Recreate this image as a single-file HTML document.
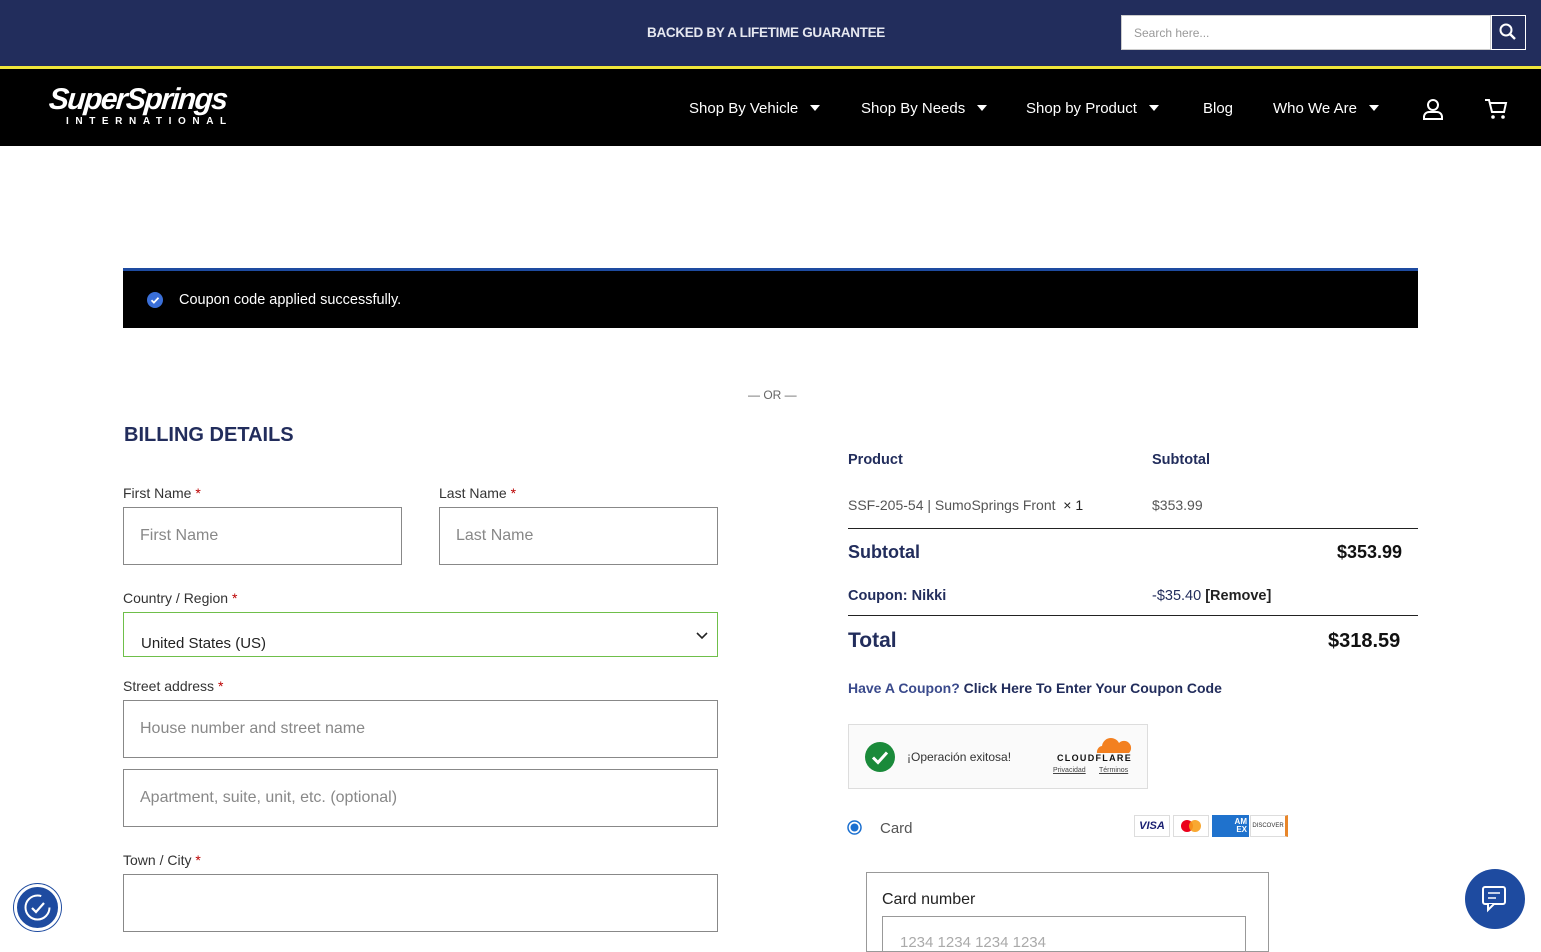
<!DOCTYPE html>
<html><head><meta charset="utf-8"><style>
*{box-sizing:border-box;margin:0;padding:0}
body{width:1541px;height:945px;overflow:hidden;background:#fff;font-family:"Liberation Sans",sans-serif;color:#333;position:relative}
.abs{position:absolute}
.top{left:0;top:0;width:1541px;height:66px;background:#222d5c}
.yl{left:0;top:66px;width:1541px;height:3px;background:#f0e63a}
.nav{left:0;top:69px;width:1541px;height:77px;background:#000}
.navi{color:#fff;font-size:15px;top:100px}
.caret{display:inline-block;border-left:5px solid transparent;border-right:5px solid transparent;border-top:6px solid #fff;margin-left:12px;vertical-align:2px}
.lbl{font-size:14px;color:#333}
.req{color:#b00}
.inp{border:1px solid #888;background:#fff;font-size:16px;color:#888;padding-left:16px;display:flex;align-items:center}
.navy{color:#222d5c}
</style></head><body>
<div class="abs top"></div>
<div class="abs" style="left:647px;top:25px;color:#e6e8f0;font-weight:bold;font-size:13.5px;letter-spacing:-0.3px">BACKED BY A LIFETIME GUARANTEE</div>
<div class="abs" style="left:1121px;top:15px;width:370px;height:35px;background:#fff;border:1px solid #ccc;font-size:12px;color:#999;padding:10px 12px">Search here...</div>
<div class="abs" style="left:1491px;top:15px;width:35px;height:35px;background:#222d5c;border:1px solid #fff">
<svg width="33" height="33" viewBox="0 0 33 33"><circle cx="14" cy="14" r="5.5" stroke="#fff" stroke-width="2" fill="none"/><line x1="18" y1="18" x2="23" y2="23" stroke="#fff" stroke-width="2.4"/></svg></div>
<div class="abs yl"></div>
<div class="abs nav"></div>
<div class="abs" style="left:49px;top:83px;color:#fff;font-weight:bold;font-style:italic;font-size:30px;letter-spacing:-1.6px;transform:skewX(-5deg)">SuperSprings</div>
<div class="abs" style="left:66px;top:116px;color:#fff;font-weight:bold;font-size:10px;letter-spacing:6.6px">INTERNATIONAL</div>
<div class="abs navi" style="left:689px">Shop By Vehicle<span class="caret"></span></div>
<div class="abs navi" style="left:861px">Shop By Needs<span class="caret"></span></div>
<div class="abs navi" style="left:1026px">Shop by Product<span class="caret"></span></div>
<div class="abs navi" style="left:1203px">Blog</div>
<div class="abs navi" style="left:1273px">Who We Are<span class="caret"></span></div>
<svg class="abs" style="left:1422px;top:98px" width="22" height="22" viewBox="0 0 22 22"><circle cx="11" cy="7" r="5" stroke="#fff" stroke-width="2" fill="none"/><path d="M2 21v-2a5 5 0 0 1 5-5h8a5 5 0 0 1 5 5v2z" stroke="#fff" stroke-width="2" fill="none"/></svg>
<svg class="abs" style="left:1484px;top:97px" width="24" height="24" viewBox="0 0 24 24"><path d="M1 3h4l3 12h12l2-9H6" stroke="#fff" stroke-width="2" fill="none"/><circle cx="9" cy="20" r="1.8" fill="#fff"/><circle cx="19" cy="20" r="1.8" fill="#fff"/></svg>

<div class="abs" style="left:123px;top:268px;width:1295px;height:60px;background:#000;border-top:3px solid #1e4ba0"></div>
<svg class="abs" style="left:147px;top:292px" width="16" height="16"><circle cx="8" cy="8" r="8" fill="#3a6fd8"/><path d="M4.5 8.2l2.4 2.4 4.6-4.8" stroke="#fff" stroke-width="1.8" fill="none"/></svg>
<div class="abs" style="left:179px;top:292px;color:#fff;font-size:14.5px">Coupon code applied successfully.</div>
<div class="abs" style="left:748px;top:388px;font-size:12px;color:#666">— OR —</div>

<div class="abs navy" style="left:124px;top:424px;font-size:20px;font-weight:bold">BILLING DETAILS</div>
<div class="abs lbl" style="left:123px;top:485px">First Name <span class="req">*</span></div>
<div class="abs lbl" style="left:439px;top:485px">Last Name <span class="req">*</span></div>
<div class="abs inp" style="left:123px;top:507px;width:279px;height:58px">First Name</div>
<div class="abs inp" style="left:439px;top:507px;width:279px;height:58px">Last Name</div>
<div class="abs lbl" style="left:123px;top:590px">Country / Region <span class="req">*</span></div>
<div class="abs" style="left:123px;top:612px;width:595px;height:45px;border:1px solid #6fbf4a;font-size:15px;color:#222;padding:22px 0 0 17px">United States (US)</div>
<svg class="abs" style="left:696px;top:632px" width="12" height="8"><path d="M1 1l5 5 5-5" stroke="#222" stroke-width="1.6" fill="none"/></svg>
<div class="abs lbl" style="left:123px;top:678px">Street address <span class="req">*</span></div>
<div class="abs inp" style="left:123px;top:700px;width:595px;height:58px">House number and street name</div>
<div class="abs inp" style="left:123px;top:769px;width:595px;height:58px">Apartment, suite, unit, etc. (optional)</div>
<div class="abs lbl" style="left:123px;top:852px">Town / City <span class="req">*</span></div>
<div class="abs inp" style="left:123px;top:874px;width:595px;height:58px"></div>

<div class="abs navy" style="left:848px;top:452px;font-size:14.5px;font-weight:bold">Product</div>
<div class="abs navy" style="left:1152px;top:452px;font-size:14.5px;font-weight:bold">Subtotal</div>
<div class="abs" style="left:848px;top:497px;font-size:14px;color:#555">SSF-205-54 | SumoSprings Front <b style="color:#222;font-weight:normal">&nbsp;× 1</b></div>
<div class="abs" style="left:1152px;top:497px;font-size:14px;color:#555">$353.99</div>
<div class="abs" style="left:848px;top:528px;width:570px;height:1px;background:#222"></div>
<div class="abs navy" style="left:848px;top:542px;font-size:18px;font-weight:bold">Subtotal</div>
<div class="abs" style="left:1337px;top:542px;font-size:18px;font-weight:bold;color:#111">$353.99</div>
<div class="abs navy" style="left:848px;top:588px;font-size:14.5px;font-weight:bold">Coupon: Nikki</div>
<div class="abs" style="left:1152px;top:588px;font-size:14.5px"><span class="navy">-$35.40</span> <b style="color:#222">[Remove]</b></div>
<div class="abs" style="left:848px;top:615px;width:570px;height:1px;background:#222"></div>
<div class="abs navy" style="left:848px;top:629px;font-size:21px;font-weight:bold">Total</div>
<div class="abs" style="left:1328px;top:630px;font-size:20px;font-weight:bold;color:#111">$318.59</div>
<div class="abs" style="left:848px;top:680px;font-size:14px;font-weight:bold"><span style="color:#3a4a8c">Have A Coupon?</span> <span class="navy">Click Here To Enter Your Coupon Code</span></div>

<div class="abs" style="left:848px;top:724px;width:300px;height:65px;background:#fafafa;border:1px solid #ddd"></div>
<svg class="abs" style="left:864px;top:741px" width="32" height="32"><circle cx="16" cy="16" r="15" fill="#1a8a3a"/><path d="M9 16.5l5 5 9-10" stroke="#fff" stroke-width="3" fill="none"/></svg>
<div class="abs" style="left:907px;top:750px;font-size:12px;color:#333">¡Operación exitosa!</div>
<svg class="abs" style="left:1094px;top:736px" width="38" height="18"><path d="M3 17a6 6 0 0 1 5-7 9 9 0 0 1 17-3 6 6 0 0 1 10 10z" fill="#f38020"/></svg>
<div class="abs" style="left:1057px;top:753px;font-size:9px;font-weight:bold;letter-spacing:1.3px;color:#111">CLOUDFLARE</div>
<div class="abs" style="left:1053px;top:767px;font-size:7px;color:#444;text-decoration:underline">Privacidad</div>
<div class="abs" style="left:1099px;top:767px;font-size:7px;color:#444;text-decoration:underline">Términos</div>

<svg class="abs" style="left:847px;top:820px" width="15" height="15"><circle cx="7.5" cy="7.5" r="6.5" stroke="#1a6fd0" stroke-width="1.5" fill="#fff"/><circle cx="7.5" cy="7.5" r="4" fill="#1a6fd0"/></svg>
<div class="abs" style="left:880px;top:820px;font-size:15px;color:#555">Card</div>
<div class="abs" style="left:1134px;top:815px;width:36px;height:22px;border:1px solid #ddd;background:#fff;font-size:11px;font-weight:bold;font-style:italic;color:#1a1f71;text-align:center;line-height:20px">VISA</div>
<svg class="abs" style="left:1173px;top:815px" width="36" height="22"><rect x=".5" y=".5" width="35" height="21" fill="#fff" stroke="#ddd"/><circle cx="14" cy="11" r="6" fill="#eb001b"/><circle cx="22" cy="11" r="6" fill="#f79e1b" opacity=".9"/></svg>
<div class="abs" style="left:1212px;top:815px;width:37px;height:22px;background:#1f72cd;color:#fff;font-size:8px;font-weight:bold;text-align:right;padding:3px 2px;line-height:8px">AM<br>EX</div>
<div class="abs" style="left:1250px;top:815px;width:38px;height:22px;border:1px solid #ddd;border-right:3px solid #e8862a;background:#fff;font-size:6px;color:#333;text-align:center;line-height:20px">DISCOVER</div>

<div class="abs" style="left:866px;top:872px;width:403px;height:80px;border:1px solid #999;overflow:hidden">
<div class="abs" style="left:15px;top:18px;font-size:16px;color:#222">Card number</div>
<div class="abs" style="left:15px;top:43px;width:364px;height:40px;border:1px solid #999;font-size:15px;color:#aaa;padding:17px 0 0 17px">1234 1234 1234 1234</div>
</div>

<div class="abs" style="left:14px;top:884px;width:47px;height:47px;border-radius:50%;background:#1e4ba0;border:3px solid #fff;box-shadow:0 0 0 1px #1e4ba0"></div>
<svg class="abs" style="left:22px;top:892px" width="31" height="31"><circle cx="15.5" cy="15.5" r="12" stroke="#fff" stroke-width="2" fill="none" stroke-dasharray="60 16"/><path d="M10 16l4 4 8-9" stroke="#fff" stroke-width="2.2" fill="none"/></svg>
<div class="abs" style="left:1465px;top:869px;width:60px;height:60px;border-radius:50%;background:#1e4ba0"></div>
<svg class="abs" style="left:1480px;top:884px" width="30" height="30"><rect x="3" y="3" width="22" height="17" rx="2" stroke="#fff" stroke-width="2" fill="none"/><path d="M8 20v6l6-6" stroke="#fff" stroke-width="2" fill="#1e4ba0"/><path d="M8 9h12M8 14h8" stroke="#fff" stroke-width="1.5"/></svg>
</body></html>
